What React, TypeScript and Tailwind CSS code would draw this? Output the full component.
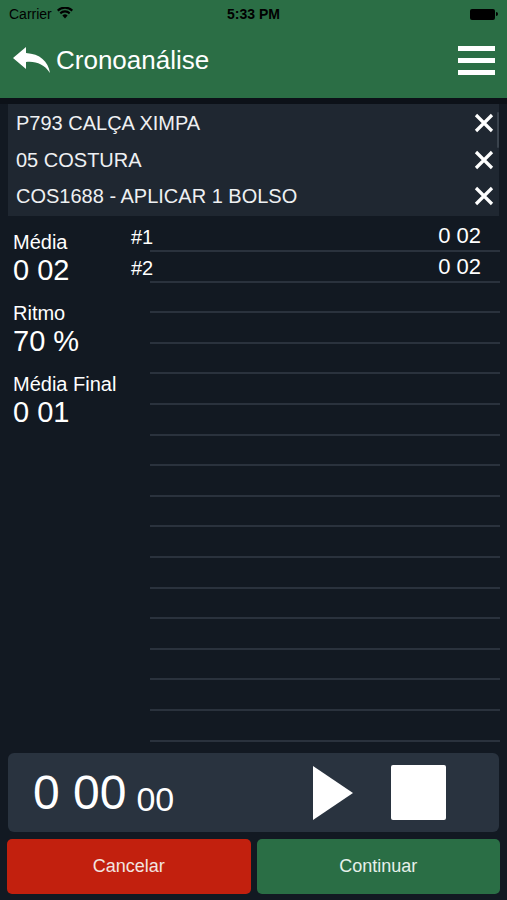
import React from "react";

const font = { fontFamily: '"Helvetica Neue", "Liberation Sans", Arial, sans-serif' };

function BackArrow() {
  return (
    <svg width="40" height="28" viewBox="0 0 40 28">
      <path d="M14 1 L1 12 L14 23 L14 16 C24 15 32 18 38 27 C36 15 28 8 14 7 Z" fill="#fff" />
    </svg>
  );
}

function Wifi() {
  return (
    <svg width="16" height="12" viewBox="0 0 16 12">
      <path d="M8 11.5 L5.4 8.4 A4 4 0 0 1 10.6 8.4 Z" fill="#000" />
      <path d="M2.6 5.6 A7.6 7.6 0 0 1 13.4 5.6 L12 7.2 A5.5 5.5 0 0 0 4 7.2 Z" fill="#000" />
      <path d="M0 2.8 A11.5 11.5 0 0 1 16 2.8 L14.6 4.4 A9.5 9.5 0 0 0 1.4 4.4 Z" fill="#000" />
    </svg>
  );
}

function Close() {
  return (
    <svg width="20" height="20" viewBox="0 0 20 20">
      <path d="M2 2 L18 18 M18 2 L2 18" stroke="#fff" strokeWidth="3.2" strokeLinecap="butt" />
    </svg>
  );
}

const items = ["P793 CALÇA XIMPA", "05 COSTURA", "COS1688 - APLICAR 1 BOLSO"];
const laps = [
  { n: "#1", v: "0 02" },
  { n: "#2", v: "0 02" },
];

export default function App() {
  const rows = Array.from({ length: 17 }, (_, i) => laps[i]);
  return (
    <div className="w-[507px] h-[900px] bg-[#121922] flex flex-col overflow-hidden text-white" style={font}>
      {/* header */}
      <div className="bg-[#2b6e45] h-[98px] flex flex-col">
        <div className="h-[28px] flex items-center px-[9px] text-black text-[14px] relative">
          <span>Carrier</span>
          <span className="ml-[5px] mt-[-3px]"><Wifi /></span>
          <span className="absolute left-0 right-0 text-center font-semibold">5:33 PM</span>
          <div className="ml-auto flex items-center">
            <div className="w-[25px] h-[11px] bg-black rounded-[2px]" />
            <div className="w-[2px] h-[4px] bg-black ml-[1px] rounded-r-sm" />
          </div>
        </div>
        <div className="flex-1 flex items-center pl-[12px] pr-[12px] pb-[6px]">
          <BackArrow />
          <span className="text-[26px] ml-[4px] leading-none">Cronoanálise</span>
          <div className="ml-auto flex flex-col gap-[7px]">
            <div className="w-[37px] h-[5px] bg-white" />
            <div className="w-[37px] h-[5px] bg-white" />
            <div className="w-[37px] h-[5px] bg-white" />
          </div>
        </div>
      </div>
      <div className="h-[6px] bg-[#0c1118]" />

      {/* selected items */}
      <div className="mx-[8px] bg-[#1f2731] py-[1px] relative">
        {items.map((t) => (
          <div key={t} className="h-[36.5px] flex items-center pl-[8px] pr-[5px]">
            <span className="text-[20px] text-[#eef0f2]">{t}</span>
            <span className="ml-auto"><Close /></span>
          </div>
        ))}
        <div className="absolute right-[0px] top-[8px] w-[2px] h-[36px] bg-[#3a434d] rounded" />
      </div>

      {/* stats + laps */}
      <div className="flex flex-1 pt-[6px]">
        <div className="w-[131px] pl-[13px] flex flex-col">
          <span className="text-[20px] mt-[9px] leading-[22px]">Média</span>
          <span className="text-[29px] leading-[34px]">0 02</span>
          <span className="text-[20px] mt-[15px] leading-[22px]">Ritmo</span>
          <span className="text-[29px] leading-[34px]">70 %</span>
          <span className="text-[20px] mt-[15px] leading-[22px]">Média Final</span>
          <span className="text-[29px] leading-[34px]">0 01</span>
        </div>
        <div className="flex-1 flex flex-col pr-[7px]">
          {rows.map((r, i) => (
            <div key={i} className="h-[30.6px] flex flex-col">
              <div className="flex-1 flex items-end pb-[3px] leading-none">
                {r && (
                  <>
                    <span className="text-[20px]">{r.n}</span>
                    <span className="ml-auto mr-[19px] text-[22px]">{r.v}</span>
                  </>
                )}
              </div>
              <div className="h-[2px] bg-[#2a323d] ml-[19px]" />
            </div>
          ))}
        </div>
      </div>

      {/* timer */}
      <div className="mx-[8px] mb-[7px] h-[79px] bg-[#29333f] rounded-[6px] flex items-center pl-[25px] pr-[53px]">
        <span className="text-[48px] leading-none">0 00</span>
        <span className="text-[34px] leading-none ml-[10px] mt-[12px]">00</span>
        <svg className="ml-auto" width="42" height="56" viewBox="0 0 42 56">
          <path d="M1 1 L41 28 L1 55 Z" fill="#fff" />
        </svg>
        <div className="ml-[37px] w-[55px] h-[55px] bg-white rounded-[2px]" />
      </div>

      {/* actions */}
      <div className="flex gap-[6px] mx-[7px] mb-[6px] h-[55px]">
        <button className="flex-1 bg-[#c2200e] rounded-[5px] text-[18px] text-[#f2e4e0]">Cancelar</button>
        <button className="flex-1 bg-[#2a6e45] rounded-[5px] text-[18px] text-[#e6f0ea]">Continuar</button>
      </div>
    </div>
  );
}
